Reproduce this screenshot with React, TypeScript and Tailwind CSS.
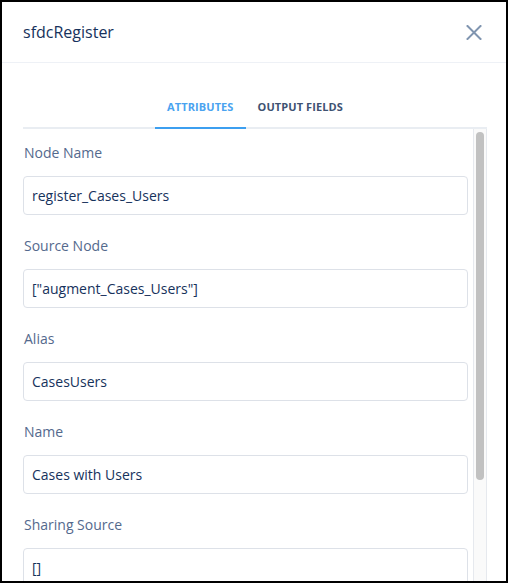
import React from "react";

const fields: { label: string; value: string }[] = [
  { label: "Node Name", value: "register_Cases_Users" },
  { label: "Source Node", value: '["augment_Cases_Users"]' },
  { label: "Alias", value: "CasesUsers" },
  { label: "Name", value: "Cases with Users" },
  { label: "Sharing Source", value: "[]" },
];

function CloseIcon() {
  return (
    <svg width="16" height="15" viewBox="0 0 16 15" fill="none">
      <path d="M1.5 1 L14.5 14 M14.5 1 L1.5 14" stroke="#8095b0" strokeWidth="2" strokeLinecap="square" />
    </svg>
  );
}

export default function App() {
  return (
    <div className="w-[510px] h-[583px] bg-white">
      <div
        className="w-[508px] h-[583px] border-2 border-black flex flex-col overflow-hidden bg-white"
        style={{ fontFamily: '"Open Sans", "Liberation Sans", sans-serif' }}
      >
        {/* header */}
        <div className="h-[61px] shrink-0 border-b border-[#eef1f6] flex items-center justify-between pl-[21px] pr-[24px]">
          <div className="text-[16px] text-[#16325c] leading-none">sfdcRegister</div>
          <CloseIcon />
        </div>

        {/* tabs */}
        <div className="shrink-0 pt-[24px] ml-[21px] mr-[19px] flex justify-center relative z-10 -mb-[2px]">
          <div className="h-[42px] px-[12px] flex items-center border-b-2 border-[#3c9ff0] text-[11px] font-bold text-[#4aa3f0] tracking-[0.1px]">
            ATTRIBUTES
          </div>
          <div className="h-[42px] px-[12px] flex items-center border-b-2 border-transparent text-[11px] font-bold text-[#3e5272] tracking-[0.1px]">
            OUTPUT FIELDS
          </div>
        </div>

        {/* form panel */}
        <div className="flex-1 min-h-0 ml-[21px] mr-[19px] border-t-2 border-[#e9edf2] flex overflow-hidden">
          <div className="flex-1 pr-[5px] pt-[14px] flex flex-col">
            {fields.map((f) => (
              <div key={f.label} className="flex flex-col mb-[21px]">
                <div className="h-[20px] leading-[20px] text-[14px] text-[#54698d] pl-[1px]">{f.label}</div>
                <div className="mt-[13px] h-[39px] shrink-0 border border-[#dde1e8] rounded-[4px] px-[8px] flex items-center text-[14px] text-[#16325c]">
                  {f.value}
                </div>
              </div>
            ))}
          </div>
          {/* scrollbar */}
          <div className="w-[14px] shrink-0 border-x border-[#e6e9ee] bg-[#fafafa] pt-[3px] flex justify-center">
            <div className="w-[8px] h-[348px] rounded-full bg-[#c1c1c1]" />
          </div>
        </div>
      </div>
    </div>
  );
}
